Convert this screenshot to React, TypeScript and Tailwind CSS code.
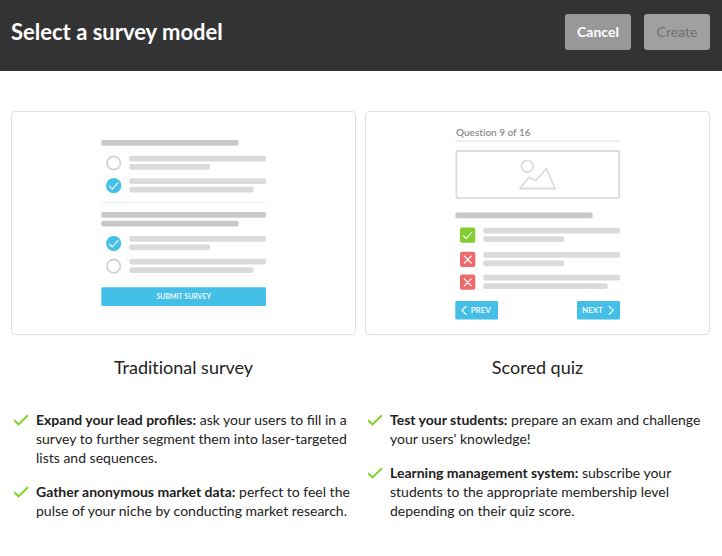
import { useState } from 'react'
import type { ReactNode } from 'react'

interface Feature {
  title: string
  text: string
}

interface SurveyModel {
  id: string
  name: string
  preview: ReactNode
  features: Feature[]
}

function Bar({ x = 117.3, y, w = 136.7, dark = false }: { x?: number; y: number; w?: number; dark?: boolean }) {
  return <rect x={x} y={y} width={w} height={5.8} rx={1.8} className={dark ? 'fill-[#c8c8c8]' : 'fill-[#dbdbdb]'} />
}

function EmptyRadio({ y }: { y: number }) {
  return <circle cx={101.7} cy={y} r={6.7} className="fill-none stroke-[#d3d3d3]" strokeWidth={1.8} />
}

function CheckedRadio({ y }: { y: number }) {
  return (
    <g>
      <circle cx={101.7} cy={y} r={7.6} className="fill-[#44c0e8]" />
      <path
        d={`M97.3 ${y + 0.5}l3 3 5.6-6.4`}
        className="fill-none stroke-white"
        strokeWidth={1.1}
        strokeLinecap="round"
        strokeLinejoin="round"
      />
    </g>
  )
}

function AnswerBox({ y, correct = false }: { y: number; correct?: boolean }) {
  return (
    <g>
      <rect x={94} y={y} width={15.3} height={15.2} rx={2} className={correct ? 'fill-[#83cc32]' : 'fill-[#ec6a6c]'} />
      <path
        d={correct ? `M97.3 ${y + 8}l3 3 5.7-6.6` : `M98.2 ${y + 4.2}l7 7m0-7l-7 7`}
        className="fill-none stroke-white"
        strokeWidth={1.1}
        strokeLinecap="round"
        strokeLinejoin="round"
      />
    </g>
  )
}

function SurveyPreview() {
  return (
    <svg viewBox="0 0 343 222" className="block w-full" aria-hidden="true">
      <Bar dark x={89.3} y={28} w={137.3} />
      <EmptyRadio y={51} />
      <Bar y={43.7} />
      <Bar y={52} w={80.7} />
      <CheckedRadio y={73.7} />
      <Bar y={66.2} />
      <Bar y={74.7} w={124.4} />
      <path d="M89.3 90.5H254" className="stroke-[#f0f0f0]" strokeWidth={1.4} />
      <Bar dark x={89.3} y={100} w={164.7} />
      <Bar dark x={89.3} y={108.8} w={137.3} />
      <CheckedRadio y={131.5} />
      <Bar y={124} />
      <Bar y={132.5} w={80.7} />
      <EmptyRadio y={154.2} />
      <Bar y={146.8} />
      <Bar y={155.2} w={124.4} />
      <rect x={89.3} y={175.3} width={164.7} height={18.6} rx={1.3} className="fill-[#44c0e8]" />
      <text x={171.7} y={187.3} textAnchor="middle" className="fill-white text-[7px] font-semibold">
        SUBMIT SURVEY
      </text>
    </svg>
  )
}

function QuizPreview() {
  return (
    <svg viewBox="0 0 343 222" className="block w-full" aria-hidden="true">
      <text x={90} y={23.6} className="fill-[#8c8c8c] text-[10px] font-semibold [font-variant-ligatures:none]">
        Question 9 of 16
      </text>
      <path d="M89.3 29.3H254" className="stroke-[#ebebeb]" strokeWidth={1.4} />
      <g className="fill-none stroke-[#dcdcdc]" strokeWidth={1.8} strokeLinejoin="round">
        <rect x={90.4} y={39} width={162.8} height={47.2} rx={1.5} />
        <circle cx={161.3} cy={54.3} r={5.9} />
        <path d="M154 76.5l8.8-11.2 7.2 3.2 10.3-12 8.8 20z" />
      </g>
      <Bar dark x={89.3} y={100.4} w={137.3} />
      <AnswerBox y={115.6} correct />
      <Bar y={115.8} />
      <Bar y={124.2} w={80.7} />
      <AnswerBox y={139.8} />
      <Bar y={140} />
      <Bar y={148.4} w={80.7} />
      <AnswerBox y={162.6} />
      <Bar y={162.8} />
      <Bar y={171.2} w={124.4} />
      <rect x={89.3} y={189} width={42.7} height={18.5} rx={1.3} className="fill-[#44c0e8]" />
      <rect x={211} y={189} width={43} height={18.5} rx={1.3} className="fill-[#44c0e8]" />
      <path
        d="M100 194.4l-4.1 4 4.1 4M243.2 194.4l4.1 4-4.1 4"
        className="fill-none stroke-white"
        strokeWidth={1.3}
        strokeLinecap="round"
        strokeLinejoin="round"
      />
      <text x={104.7} y={201} className="fill-white text-[8px] font-semibold">
        PREV
      </text>
      <text x={216} y={201} className="fill-white text-[8px] font-semibold">
        NEXT
      </text>
    </svg>
  )
}

const models: SurveyModel[] = [
  {
    id: 'survey',
    name: 'Traditional survey',
    preview: <SurveyPreview />,
    features: [
      {
        title: 'Expand your lead profiles:',
        text: 'ask your users to fill in a survey to further segment them into laser-targeted lists and sequences.',
      },
      {
        title: 'Gather anonymous market data:',
        text: 'perfect to feel the pulse of your niche by conducting market research.',
      },
    ],
  },
  {
    id: 'quiz',
    name: 'Scored quiz',
    preview: <QuizPreview />,
    features: [
      {
        title: 'Test your students:',
        text: "prepare an exam and challenge your users' knowledge!",
      },
      {
        title: 'Learning management system:',
        text: 'subscribe your students to the appropriate membership level depending on their quiz score.',
      },
    ],
  },
]

function FeatureItem({ title, text }: Feature) {
  return (
    <li className="flex gap-[7px]">
      <svg viewBox="0 0 16 19" className="h-[19px] w-4 shrink-0" aria-hidden="true">
        <path d="M1.2 10.3l4.3 4.2L15 5.2" className="fill-none stroke-[#7ed321]" strokeWidth={1.9} />
      </svg>
      <p>
        <strong className="font-bold">{title}</strong> {text}
      </p>
    </li>
  )
}

export default function App() {
  const [selected, setSelected] = useState<string | null>(null)

  return (
    <div className="min-h-screen bg-white font-[Lato,sans-serif] text-[#222]">
      <header className="flex items-center justify-between bg-[#333] pt-3.5 pr-3 pb-[21px] pl-[11px]">
        <h1 className="text-[22px] leading-9 font-bold text-white">Select a survey model</h1>
        <div className="flex gap-[13px] text-[14px] leading-5">
          <button type="button" className="h-9 w-[66px] rounded-[3px] bg-[#999] font-bold text-white">
            Cancel
          </button>
          <button
            type="button"
            disabled={!selected}
            className="h-9 w-[66px] rounded-[3px] bg-[#999] text-white disabled:bg-[#a0a0a0] disabled:text-[#707070]"
          >
            Create
          </button>
        </div>
      </header>

      <main className="grid grid-cols-2 gap-[9px] pt-10 pr-3 pb-8 pl-[11px]">
        {models.map((model) => (
          <section key={model.id}>
            <button
              type="button"
              aria-labelledby={`${model.id}-name`}
              aria-pressed={selected === model.id}
              onClick={() => setSelected(model.id)}
              className="block w-full rounded-[4px] border border-[#d9e2e0] aria-pressed:border-[#44c0e8]"
            >
              {model.preview}
            </button>
            <h2
              id={`${model.id}-name`}
              className="mt-5 text-center text-[18px] leading-6 [font-variant-ligatures:none]"
            >
              {model.name}
            </h2>
            <ul className="mt-[31px] flex flex-col gap-[15px] pl-0.5 text-[14px] leading-[19px]">
              {model.features.map((feature) => (
                <FeatureItem key={feature.title} {...feature} />
              ))}
            </ul>
          </section>
        ))}
      </main>
    </div>
  )
}
